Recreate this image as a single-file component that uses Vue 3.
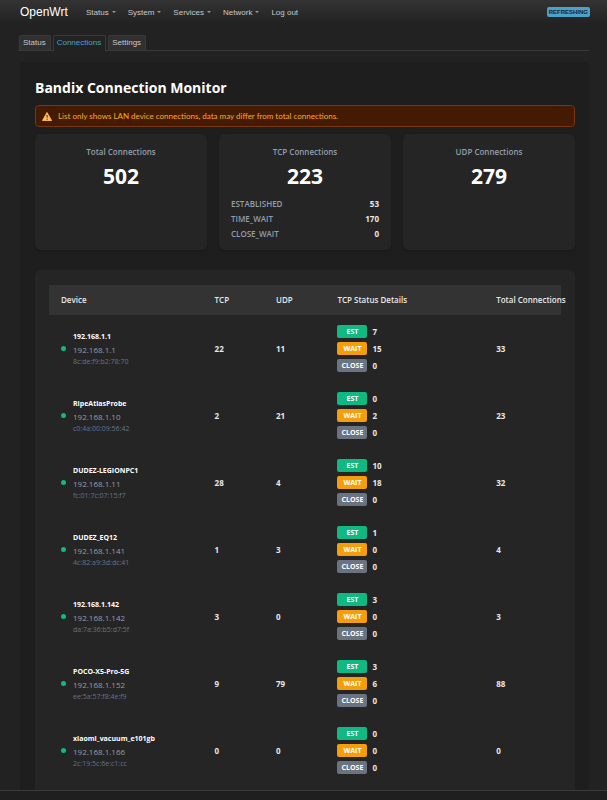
<script setup>
const menu = [
  { label: 'Status', drop: true },
  { label: 'System', drop: true },
  { label: 'Services', drop: true },
  { label: 'Network', drop: true },
  { label: 'Log out', drop: false }
]

const tabs = ['Status', 'Connections', 'Settings']
const activeTab = 'Connections'

const stats = [
  { title: 'Total Connections', value: 502, details: [] },
  {
    title: 'TCP Connections',
    value: 223,
    details: [
      ['ESTABLISHED', 53],
      ['TIME_WAIT', 170],
      ['CLOSE_WAIT', 0]
    ]
  },
  { title: 'UDP Connections', value: 279, details: [] }
]

const devices = [
  { name: '192.168.1.1', ip: '192.168.1.1', mac: '8c:de:f9:b2:78:70', tcp: 22, udp: 11, est: 7, wait: 15, close: 0, total: 33 },
  { name: 'RipeAtlasProbe', ip: '192.168.1.10', mac: 'c0:4a:00:09:56:42', tcp: 2, udp: 21, est: 0, wait: 2, close: 0, total: 23 },
  { name: 'DUDEZ-LEGIONPC1', ip: '192.168.1.11', mac: 'fc:01:7c:07:15:f7', tcp: 28, udp: 4, est: 10, wait: 18, close: 0, total: 32 },
  { name: 'DUDEZ_EQ12', ip: '192.168.1.141', mac: '4c:82:a9:3d:dc:41', tcp: 1, udp: 3, est: 1, wait: 0, close: 0, total: 4 },
  { name: '192.168.1.142', ip: '192.168.1.142', mac: 'da:7a:36:b5:d7:5f', tcp: 3, udp: 0, est: 3, wait: 0, close: 0, total: 3 },
  { name: 'POCO-X5-Pro-5G', ip: '192.168.1.152', mac: 'ee:5a:57:f8:4e:f9', tcp: 9, udp: 79, est: 3, wait: 6, close: 0, total: 88 },
  { name: 'xiaomi_vacuum_e101gb', ip: '192.168.1.166', mac: '2c:19:5c:6e:c1:cc', tcp: 0, udp: 0, est: 0, wait: 0, close: 0, total: 0 }
]
</script>

<template>
  <div class="page">
    <header class="topbar">
      <a class="brand" href="#">OpenWrt</a>
      <nav class="menu">
        <a v-for="item in menu" :key="item.label" href="#">
          {{ item.label }}<span v-if="item.drop" class="caret"></span>
        </a>
      </nav>
      <button type="button" class="refresh">REFRESHING</button>
    </header>

    <nav class="tabs">
      <a v-for="tab in tabs" :key="tab" href="#" :class="{ active: tab === activeTab }">{{ tab }}</a>
    </nav>

    <main class="panel">
      <h1>Bandix Connection Monitor</h1>

      <div class="notice">
        <svg viewBox="0 0 20 18" width="10" height="9" aria-hidden="true">
          <path d="M10 1 L19 17 H1 Z" fill="#ffc266" stroke="#ffb04a" stroke-width="2" stroke-linejoin="round" />
          <path d="M9 6 h2.4 l-.5 6 h-1.4 Z" fill="#4a2a10" />
          <circle cx="10.2" cy="14.4" r="1.2" fill="#4a2a10" />
        </svg>
        <span>List only shows LAN device connections, data may differ from total connections.</span>
      </div>

      <section class="stats">
        <article v-for="stat in stats" :key="stat.title" class="stat">
          <h2>{{ stat.title }}</h2>
          <p class="value">{{ stat.value }}</p>
          <dl v-if="stat.details.length">
            <div v-for="[label, count] in stat.details" :key="label">
              <dt>{{ label }}</dt>
              <dd>{{ count }}</dd>
            </div>
          </dl>
        </article>
      </section>

      <section class="list">
        <table>
          <colgroup>
            <col class="c-device" />
            <col class="c-count" />
            <col class="c-count" />
            <col class="c-details" />
            <col />
          </colgroup>
          <thead>
            <tr>
              <th>Device</th>
              <th>TCP</th>
              <th>UDP</th>
              <th>TCP Status Details</th>
              <th>Total Connections</th>
            </tr>
          </thead>
          <tbody>
            <tr v-for="d in devices" :key="d.mac">
              <td>
                <div class="device">
                  <span class="dot"></span>
                  <div>
                    <div class="name">{{ d.name }}</div>
                    <div class="ip">{{ d.ip }}</div>
                    <div class="mac">{{ d.mac }}</div>
                  </div>
                </div>
              </td>
              <td>{{ d.tcp }}</td>
              <td>{{ d.udp }}</td>
              <td>
                <div class="states">
                  <div><span class="badge est">EST</span>{{ d.est }}</div>
                  <div><span class="badge wait">WAIT</span>{{ d.wait }}</div>
                  <div><span class="badge close">CLOSE</span>{{ d.close }}</div>
                </div>
              </td>
              <td>{{ d.total }}</td>
            </tr>
          </tbody>
        </table>
      </section>
    </main>

    <footer class="bottom"></footer>
  </div>
</template>

<style>
body {
  margin: 0;
  background: #222;
}
</style>

<style scoped>
.page {
  box-sizing: border-box;
  min-height: 100vh;
  display: flex;
  flex-direction: column;
  color: #e8e8e8;
  font-family: "Liberation Sans", Arial, sans-serif;
}
a {
  text-decoration: none;
}
.topbar {
  height: 24px;
  display: flex;
  align-items: center;
  padding: 0 17px 0 20px;
  background: linear-gradient(#333, #222);
}
.brand {
  width: 66px;
  color: #fff;
  font-size: 12px;
}
.menu {
  flex: 1;
  display: flex;
  gap: 12px;
  font-size: 8px;
}
.menu a {
  display: flex;
  align-items: center;
  gap: 3px;
  color: #c8c8c8;
}
.caret {
  border: 2px solid transparent;
  border-top-color: #999;
  border-bottom: 0;
}
.refresh {
  height: 10px;
  padding: 0 2px;
  border: 0;
  border-radius: 2px;
  background: #4aa3c7;
  color: #222;
  font: bold 6px/10px "Liberation Sans", Arial, sans-serif;
}
.tabs {
  display: flex;
  align-items: flex-end;
  gap: 2px;
  margin: 11px 18px 0;
  padding-left: 1px;
  border-bottom: 1px solid #3a3a3a;
}
.tabs a {
  padding: 0 4px 0 3px;
  border: 1px solid #3a3a3a;
  border-bottom: 0;
  border-radius: 2px 2px 0 0;
  background: #303030;
  color: #c8c8c8;
  font-size: 8px;
  line-height: 14px;
}
.tabs a.active {
  margin-bottom: -1px;
  padding-bottom: 1px;
  background: #222;
  color: #4aa3c7;
}
.panel {
  flex: 1;
  display: flex;
  flex-direction: column;
  margin: 11px 18px 0 20px;
  padding: 15px 14px 0 15px;
  border-radius: 4px 4px 0 0;
  background: #1e1e1e;
  font-family: "Open Sans", "Noto Sans", sans-serif;
  font-size: 8px;
}
h1 {
  margin: 0;
  color: #fff;
  font-size: 14px;
  font-weight: 700;
  line-height: 22px;
}
.notice {
  display: flex;
  align-items: center;
  gap: 6px;
  margin: 6px 0 7px;
  padding: 0 6px;
  border: 1px solid #78350f;
  border-radius: 4px;
  background: #451a03;
  color: #fbab1c;
  font-family: Lato, "Open Sans", sans-serif;
  line-height: 20px;
}
.stats {
  display: grid;
  grid-template-columns: repeat(3, 1fr);
  gap: 12px;
}
.stat {
  padding: 11px 12px 9px;
  border-radius: 6px;
  background: #252525;
  box-shadow: 0 1px 2px rgba(0, 0, 0, 0.25);
}
.stat h2 {
  margin: 0;
  color: #949eab;
  font-size: 8px;
  font-weight: 600;
  line-height: 14px;
  text-align: center;
}
.value {
  margin: 4px 0 7px;
  color: #fff;
  font-size: 21px;
  font-weight: 700;
  line-height: 26px;
  text-align: center;
}
dl {
  margin: 0;
}
dl div {
  display: flex;
  justify-content: space-between;
  line-height: 15px;
}
dt {
  color: #949eab;
  font-weight: 600;
}
dd {
  margin: 0;
  font-weight: 700;
}
.list {
  flex: 1;
  margin-top: 20px;
  padding: 15px 14px 0;
  border-radius: 6px 6px 0 0;
  background: #252525;
}
table {
  width: 100%;
  table-layout: fixed;
  border-collapse: collapse;
}
.c-device {
  width: 30%;
}
.c-count {
  width: 12%;
}
.c-details {
  width: 31%;
}
th {
  height: 28px;
  padding: 0 0 2px 12px;
  background: #333;
  font-weight: 600;
  text-align: left;
  white-space: nowrap;
}
td {
  height: 67px;
  padding: 0 0 0 12px;
  font-weight: 700;
}
.device {
  display: flex;
  align-items: center;
  gap: 7px;
}
.dot {
  width: 5px;
  height: 5px;
  border-radius: 50%;
  background: #10b981;
}
.name {
  color: #fff;
  font-size: 7px;
  line-height: 14px;
}
.ip {
  color: #949eab;
  font-weight: 400;
  line-height: 12px;
}
.mac {
  color: #64748b;
  font-size: 7px;
  font-weight: 400;
  line-height: 12px;
}
.states {
  display: flex;
  flex-direction: column;
  gap: 4px;
}
.states div {
  display: flex;
  align-items: center;
  gap: 5px;
  line-height: 13px;
}
.badge {
  width: 30px;
  border-radius: 2px;
  color: #fff;
  font-size: 7px;
  text-align: center;
}
.est {
  background: #10b981;
}
.wait {
  background: #f59e0b;
}
.close {
  background: #6b7280;
}
.bottom {
  height: 9px;
  border-top: 1px solid #3a3a3a;
  background: #1f1f1f;
}
</style>
